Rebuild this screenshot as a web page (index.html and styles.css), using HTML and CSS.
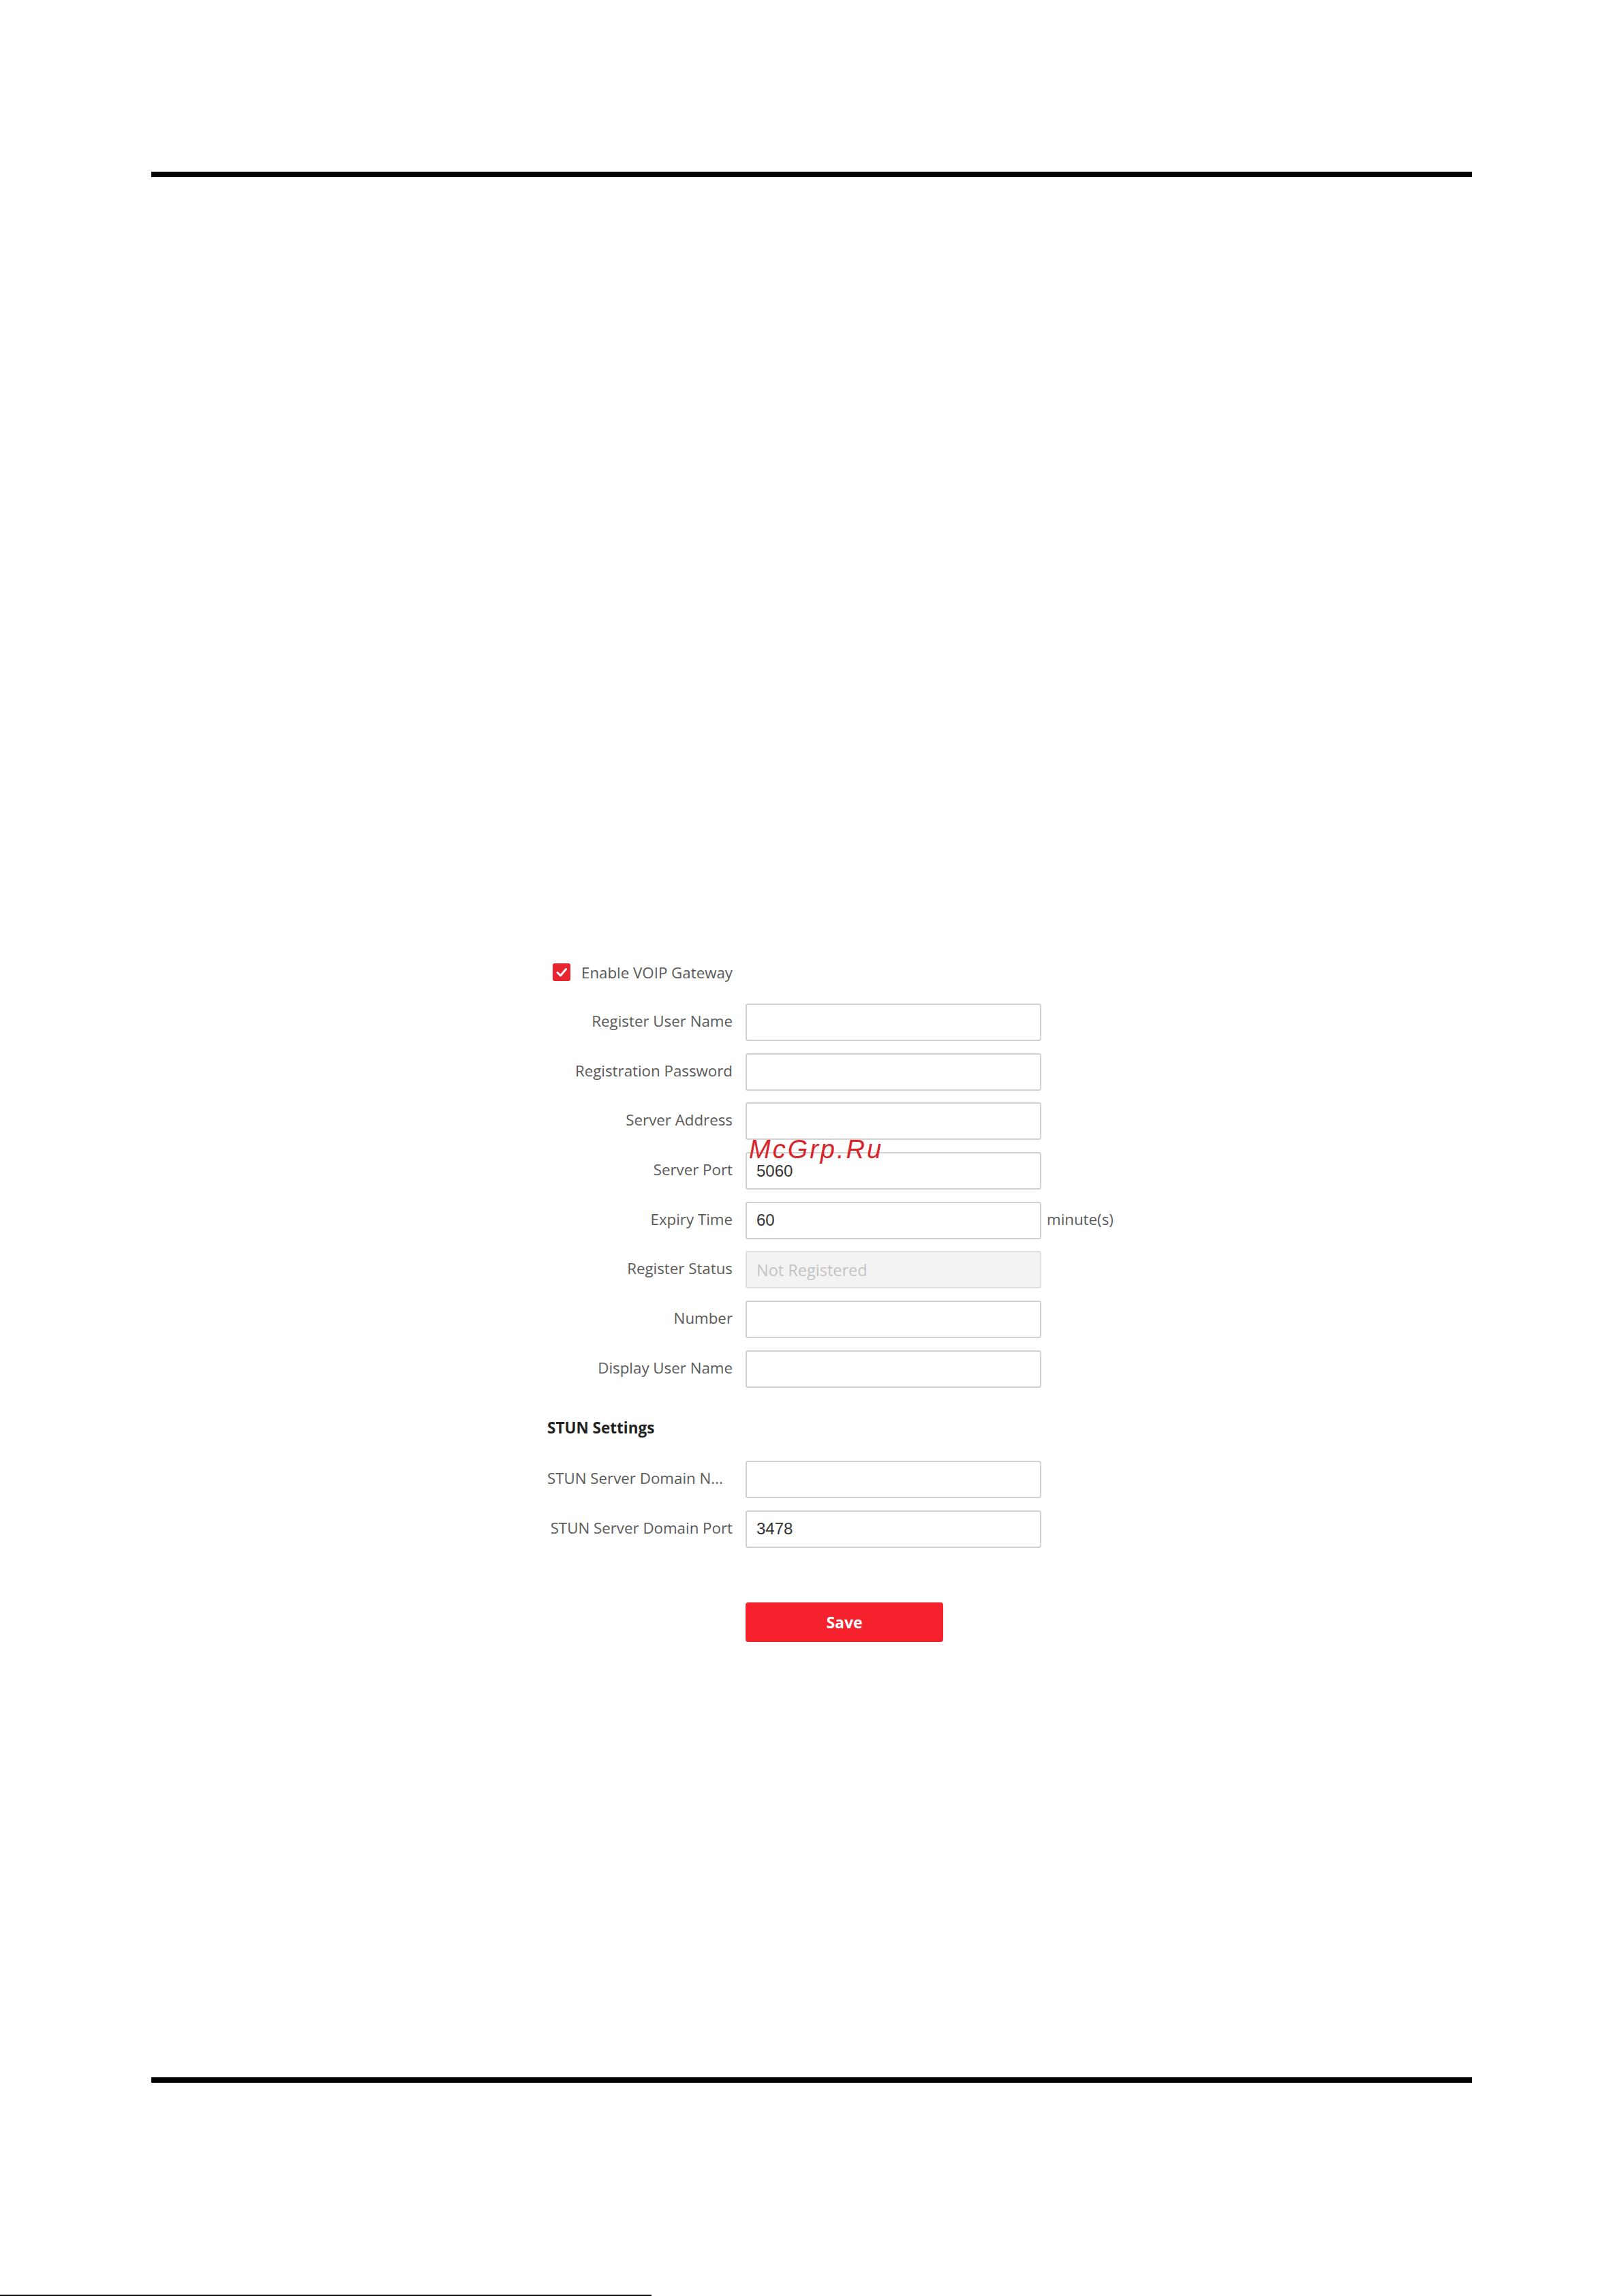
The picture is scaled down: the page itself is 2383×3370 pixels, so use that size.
FILE: index.html
```html
<!DOCTYPE html>
<html lang="en">
<head>
  <meta charset="UTF-8">
  <meta name="viewport" content="width=device-width, initial-scale=1.0">
  <title>VOIP Gateway</title>
  <link rel="stylesheet" href="styles.css">
</head>
<body>

  <!-- Page top rule -->
  <div class="rule rule-top"></div>

  <!-- VOIP settings form -->
  <form class="voip-form" onsubmit="return false;">
    <label class="check-row">
      <span class="checkbox">
        <svg viewBox="0 0 26 26" width="26" height="26">
          <polyline points="7,13.5 11.5,18 19.5,8.5" fill="none" stroke="#fff" stroke-width="3" stroke-linecap="round" stroke-linejoin="round"/>
        </svg>
      </span>
      Enable VOIP Gateway
    </label>

    <div class="fields">
      <div class="field">
        <span class="label">Register User Name</span>
        <input class="text-input" type="text">
      </div>
      <div class="field">
        <span class="label">Registration Password</span>
        <input class="text-input" type="password">
      </div>
      <div class="field">
        <span class="label">Server Address</span>
        <input class="text-input" type="text">
      </div>
      <div class="field">
        <span class="label">Server Port</span>
        <input class="text-input" type="text" value="5060">
      </div>
      <div class="field">
        <span class="label">Expiry Time</span>
        <input class="text-input" type="text" value="60">
        <span class="unit">minute(s)</span>
      </div>
      <div class="field">
        <span class="label">Register Status</span>
        <input class="text-input disabled" type="text" placeholder="Not Registered" disabled>
      </div>
      <div class="field">
        <span class="label">Number</span>
        <input class="text-input" type="text">
      </div>
      <div class="field">
        <span class="label">Display User Name</span>
        <input class="text-input" type="text">
      </div>
    </div>

    <h3 class="section-title">STUN Settings</h3>

    <div class="fields">
      <div class="field">
        <span class="label truncated" title="STUN Server Domain Name">STUN Server Domain N...</span>
        <input class="text-input" type="text">
      </div>
      <div class="field">
        <span class="label">STUN Server Domain Port</span>
        <input class="text-input" type="text" value="3478">
      </div>
    </div>

    <div class="actions">
      <button class="btn-save" type="submit">Save</button>
    </div>
  </form>

  <!-- Page bottom rule -->
  <div class="rule rule-bottom"></div>
  <div class="scan-edge"></div>

  <!-- Watermark -->
  <div class="watermark">McGrp.Ru</div>

</body>
</html>
```

FILE: styles.css
```css
body {
  margin: 0;
  padding: 0;
  background: #fff;
  position: relative;
  width: 2383px;
  height: 3370px;
  overflow: hidden;
  font-family: "Open Sans", "Noto Sans", sans-serif;
  color: #595959;
}

/* Page rules */
.rule {
  height: 8px;
  background: #000;
  margin-left: 222px;
  width: 1938px;
}

.rule-top {
  margin-top: 252px;
}

.rule-bottom {
  margin-top: 639px;
}

.scan-edge {
  margin-top: 311px;
  width: 956px;
  height: 2px;
  background: #111;
}

/* Form */
.voip-form {
  margin: 1154px 0 0 803px;
  font-size: 22.3px;
}

.check-row {
  display: flex;
  align-items: center;
  gap: 16px;
  height: 26px;
  margin-left: 8px;
  margin-bottom: 33px;
  color: #595959;
}

.checkbox {
  width: 26px;
  height: 26px;
  border-radius: 3px;
  background: #e8262f;
  display: flex;
}

.fields {
  display: flex;
  flex-direction: column;
  gap: 17.7px;
}

.field {
  display: flex;
  align-items: center;
  gap: 19px;
  height: 55px;
}

.label {
  width: 272px;
  flex-shrink: 0;
  text-align: right;
  white-space: nowrap;
  margin-top: -4px;
}

.label.truncated {
  text-align: left;
  overflow: hidden;
}

.text-input {
  box-sizing: border-box;
  width: 434px;
  height: 55px;
  border: 2px solid #d2d2d2;
  border-radius: 3px;
  padding: 0 14px;
  font-family: "Liberation Sans", Arial, sans-serif;
  font-size: 24px;
  color: #333;
  background: #fff;
  outline: none;
}

.text-input.disabled {
  background: #f3f3f3;
  border-color: #e0e0e0;
  font-family: "Open Sans", "Noto Sans", sans-serif;
  font-size: 23.5px;
}

.text-input.disabled::placeholder {
  color: #c4c4c4;
}

.unit {
  margin-left: -11px;
  margin-top: -4px;
  color: #595959;
}

.section-title {
  margin: 43.5px 0 31.5px;
  font-size: 22.5px;
  line-height: 32px;
  font-weight: bold;
  color: #222;
}

.actions {
  margin-top: 80px;
  padding-left: 291px;
}

.btn-save {
  width: 290px;
  height: 58px;
  border: none;
  border-radius: 4px;
  background: #f5222d;
  color: #fff;
  font-family: "Open Sans", "Noto Sans", sans-serif;
  font-size: 23px;
  font-weight: bold;
  cursor: pointer;
}

/* Watermark over the form */
.watermark {
  position: absolute;
  left: 1099px;
  top: 1668px;
  font-family: "Liberation Sans", Arial, sans-serif;
  font-style: italic;
  font-size: 38px;
  line-height: 1;
  letter-spacing: 3px;
  color: #d8232a;
}
```
